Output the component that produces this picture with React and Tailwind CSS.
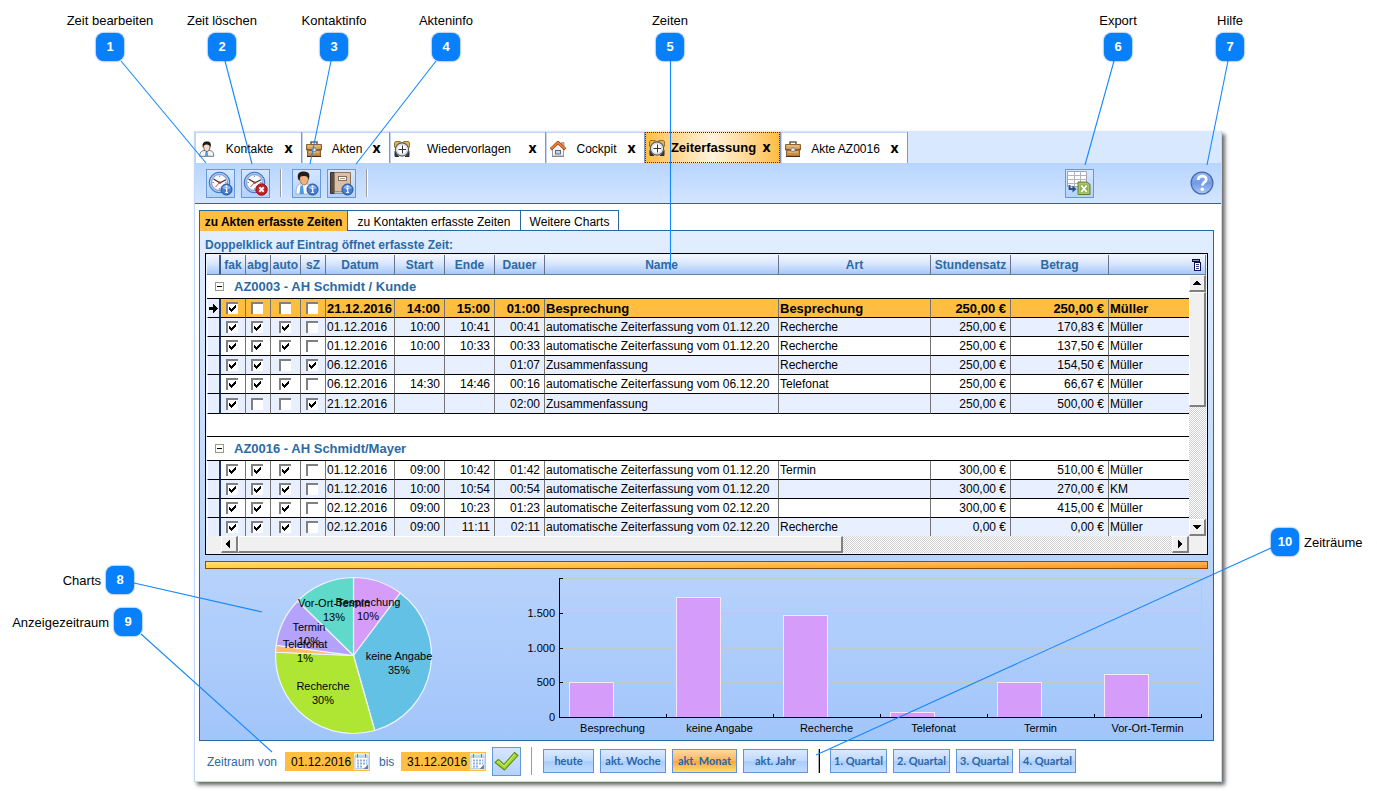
import React from "react";

const CALLOUTS = [
  { n: 1, label: "Zeit bearbeiten", x: 110, y: 47, side: "top", to: [206, 163], from: [121, 61] },
  { n: 2, label: "Zeit löschen", x: 222, y: 47, side: "top", to: [252, 164], from: [225, 61] },
  { n: 3, label: "Kontaktinfo", x: 334, y: 47, side: "top", to: [310, 164], from: [331, 61] },
  { n: 4, label: "Akteninfo", x: 446, y: 47, side: "top", to: [356, 164], from: [436, 61] },
  { n: 5, label: "Zeiten", x: 670, y: 47, side: "top", to: [670.5, 270], from: [670.5, 61] },
  { n: 6, label: "Export", x: 1118, y: 47, side: "top", to: [1085, 165], from: [1114, 61] },
  { n: 7, label: "Hilfe", x: 1230, y: 47, side: "top", to: [1207, 165], from: [1228, 61] },
  { n: 8, label: "Charts", x: 120, y: 580, side: "left", to: [262, 612], from: [134, 583] },
  { n: 9, label: "Anzeigezeitraum", x: 128, y: 622, side: "left", to: [272, 752], from: [141, 634] },
  { n: 10, label: "Zeiträume", x: 1285, y: 542, side: "right", to: [816, 755], from: [1271, 548] },
];

const LABEL_PLACE = {
  top: "left-1/2 -translate-x-1/2 -top-[21px]",
  left: "right-[33px] top-[6px]",
  right: "left-[33px] top-[6px]",
};

function Callouts() {
  return (
    <div className="pointer-events-none absolute inset-0 z-10 overflow-hidden">
      <svg className="absolute left-0 top-0 h-[791px] w-[1377px]" viewBox="0 0 1377 791" aria-hidden="true">
        {CALLOUTS.map((c) => (
          <line key={c.n} x1={c.from[0]} y1={c.from[1]} x2={c.to[0]} y2={c.to[1]} stroke="#1488ff" strokeWidth="1.1" />
        ))}
      </svg>
      {CALLOUTS.map((c) => (
        <div key={c.n} className="absolute h-[28px] w-[28px]" style={{ left: c.x - 14, top: c.y - 14 }}>
          <span className="flex h-[28px] w-[28px] items-center justify-center rounded-[8px] bg-[#0880fc] text-[13px] font-bold text-white shadow-[0_0_2px_#0060d0]">
            {c.n}
          </span>
          <span className={"absolute whitespace-nowrap text-[13px] leading-[18px] text-black " + LABEL_PLACE[c.side]}>{c.label}</span>
        </div>
      ))}
    </div>
  );
}

/* ---------- icons ---------- */

function PersonIcon({ className }) {
  return (
    <svg viewBox="0 0 16 16" className={className} aria-hidden="true">
      <path d="M.7 15.300c0-4 1.500-5.300 4.500-5.800h5.500c3 .5 4 1.800 4 5.800z" fill="#f4f6fa" stroke="#5f6672" strokeWidth=".9" />
      <path d="M6.500 10.500h2l.8 4.500H6z" fill="#4f9be0" />
      <path d="M4.500 4c0-2.500 6.500-2 6.500.5 0 3.800-1.200 6-3.200 6S4.500 8 4.500 4z" fill="#f6dcc6" stroke="#4a3a30" strokeWidth=".8" />
      <path d="M3.800 6.500C2.800 2 5 .3 8 .4c3.300 0 4.600 2 3.500 5.800C11 4.500 9 3.400 7.500 3.600 5.800 3.700 4.500 4.600 3.800 6.500z" fill="#1e1a18" />
    </svg>
  );
}

function BriefcaseIcon({ className }) {
  return (
    <svg viewBox="0 0 16 16" className={className} aria-hidden="true">
      <path d="M5 4V1h6v3" fill="none" stroke="#6f6250" strokeWidth="1.600" />
      <path d="M.5 3.500h15v5.500h-15z" fill="#d9a35c" stroke="#8a6434" />
      <path d="M1.500 9h13v6h-13z" fill="#c98e48" stroke="#8a6434" />
      <path d="M.5 8l5.500 1.500h4L15.500 8" fill="none" stroke="#7a5220" strokeWidth="1.200" />
      <path d="M2 5h12M3 11h10" stroke="#f0cb92" />
      <path d="M1 15.500h14" stroke="#4a3010" />
      <rect x="6" y="7" width="4" height="3.500" rx="1" fill="#dbe6ee" stroke="#66727f" strokeWidth=".7" />
    </svg>
  );
}

function AlarmIcon({ className }) {
  return (
    <svg viewBox="0 0 16 16" className={className} aria-hidden="true">
      <path d="M.5 6V1.500Q1 .5 2 .5h4L8 2l2-1.500h4q1 0 1.500 1V6l-2 2h-11z" fill="#e8b243" stroke="#7a5a1c" strokeWidth=".8" />
      <path d="M1 10v5.500h4M15 10v5.500h-4" fill="#3a3a40" stroke="#2d2d33" strokeWidth="1" />
      <circle cx="8" cy="8.500" r="6.600" fill="#eef1f6" stroke="#565c66" strokeWidth="1.200" />
      <circle cx="8" cy="8.500" r="5" fill="#fff" stroke="#c4ccd6" strokeWidth=".8" />
      <path d="M8.500 4.500v8M4.500 8.500h7.500" stroke="#333" strokeWidth="1" />
    </svg>
  );
}

function HouseIcon({ className }) {
  return (
    <svg viewBox="0 0 16 16" className={className} aria-hidden="true">
      <path d="M11.500 1.500h2.500V6h-2.500z" fill="#bdbdbd" stroke="#777" strokeWidth=".6" />
      <path d="M2.500 7.500L8 2.500l5.500 5V15h-11z" fill="#f4f4f4" stroke="#868686" strokeWidth=".8" />
      <path d="M.7 8.300L8 1.500l7.300 6.800" fill="none" stroke="#8c3412" strokeWidth="3" />
      <path d="M1 8L8 1.500 15 8" fill="none" stroke="#ef7d2c" strokeWidth="1.800" />
      <rect x="5.500" y="9.500" width="5" height="3.500" fill="#b8d8f4" stroke="#5b6f88" />
      <path d="M2 15.500h12" stroke="#8a8a8a" />
    </svg>
  );
}

function ClockFace() {
  return (
    <>
      <circle cx="11.500" cy="11.500" r="10.300" fill="#6d9be4" stroke="#3c6dbd" />
      <circle cx="11.500" cy="11.500" r="9" fill="none" stroke="#bcd6fa" />
      <circle cx="11.500" cy="11.500" r="7.800" fill="#f7f9fc" stroke="#8795aa" strokeWidth=".6" />
      <path d="M11.500 4.500v1.500M11.500 17v1.500M4.500 11.500h1.500M17 11.500h1.500" stroke="#777" strokeWidth=".8" />
      <path d="M5.500 8l6.500 3.800 6-3" fill="none" stroke="#333" strokeWidth="1.200" />
      <path d="M11.500 11.500L7.500 16" stroke="#d33" strokeWidth=".9" />
      <circle cx="11.800" cy="11.600" r="1.200" fill="#d22" />
    </>
  );
}

function InfoBadge() {
  return (
    <>
      <circle cx="18.500" cy="18.500" r="5.500" fill="#4a80d4" stroke="#1f4a9c" />
      <path d="M14.300 17c1-3.300 7.400-3.300 8.400 0-2 1.500-6 1.500-8.400 0z" fill="#8db4ee" />
      <path d="M17.300 17.600h1.400v4M17.300 21.500h2.600" stroke="#fff" strokeWidth="1.200" fill="none" />
      <circle cx="18.500" cy="15.300" r="1" fill="#fff" />
    </>
  );
}

function ClockInfoIcon() {
  return (
    <svg viewBox="0 0 25 25" className="h-[25px] w-[25px]" aria-hidden="true">
      <ClockFace />
      <InfoBadge />
    </svg>
  );
}

function ClockDeleteIcon() {
  return (
    <svg viewBox="0 0 25 25" className="h-[25px] w-[25px]" aria-hidden="true">
      <ClockFace />
      <circle cx="18.500" cy="18.500" r="5.700" fill="#c4202a" stroke="#8b0f18" />
      <path d="M16.300 16.300l4.400 4.400M20.700 16.300l-4.400 4.400" stroke="#fff" strokeWidth="2" />
    </svg>
  );
}

function PersonInfoIcon() {
  return (
    <svg viewBox="0 0 25 25" className="h-[25px] w-[25px]" aria-hidden="true">
      <path d="M2 23c0-6 1-9 4-10h7c4 .5 5 4 5 10z" fill="#fafbfd" stroke="#9aa5b8" strokeWidth=".8" />
      <path d="M6.500 14.500h2.500l1 8.500H5.500z" fill="#4c9ade" />
      <path d="M5.500 5.500c0-4 9-4 9 0 0 5-1.800 8.500-4.300 8.500S5.500 11 5.500 5.500z" fill="#eeb27c" stroke="#7a4a24" strokeWidth=".6" />
      <path d="M4.200 8.500C2.800 2.700 5 .5 10 .6c5.200.1 6.500 3.400 4.600 8.200-.5-2.700-1.600-4-4.600-3.900C7 5 5.700 5 5.800 9.500z" fill="#241e1a" />
      <InfoBadge />
    </svg>
  );
}

function BookInfoIcon() {
  return (
    <svg viewBox="0 0 25 25" className="h-[25px] w-[25px]" aria-hidden="true">
      <path d="M1.500 1.500h4v21h-4z" fill="#5b4d46" stroke="#3b302b" />
      <path d="M5.500 1.500h16v19.500h-16z" fill="#d8bfa6" stroke="#8d745e" />
      <path d="M5.500 21h16v1.500h-16z" fill="#f2f2f2" stroke="#777" strokeWidth=".7" />
      <rect x="9.500" y="5.500" width="8" height="4" fill="#fff" stroke="#8a6c52" />
      <path d="M11 7.500h5" stroke="#888" strokeWidth=".8" />
      <InfoBadge />
    </svg>
  );
}

function ExportIcon() {
  return (
    <svg viewBox="0 0 25 25" className="h-[25px] w-[25px]" aria-hidden="true">
      <path d="M.5 .5h19v15h-19z" fill="#fff" stroke="#a3a3ab" />
      <path d="M.5 4.500h19M.5 8.500h19M.5 12.500h19M7.500.5v15M13.500.5v15" stroke="#b3b3bd" fill="none" />
      <path d="M2.500 14v4h4" fill="none" stroke="#2a4f92" strokeWidth="1.800" />
      <path d="M5.500 14.500l4 3.500-4 3.500z" fill="#2a4f92" />
      <path d="M11 11h9l3 2.500V23.500H11z" fill="#a9c46c" stroke="#5d7f2c" />
      <path d="M13 13.500h8v8h-8z" fill="#8fb04c" />
      <path d="M14.300 14.500l5.400 6.500M19.700 14.500L14.300 21" stroke="#fff" strokeWidth="1.900" />
    </svg>
  );
}

function HelpIcon() {
  return (
    <svg viewBox="0 0 24 24" className="h-[24px] w-[24px]" aria-hidden="true">
      <defs>
        <linearGradient id="help-fill" x1="0" y1="0" x2="0" y2="1">
          <stop offset="0" stopColor="#9dbcf4" />
          <stop offset=".5" stopColor="#6f9ae6" />
          <stop offset="1" stopColor="#a9c8fa" />
        </linearGradient>
      </defs>
      <circle cx="12" cy="12" r="10.900" fill="url(#help-fill)" stroke="#4a6aa6" strokeWidth="1.200" />
      <path d="M8.200 9c0-5 8-5 8-.6 0 3-3.900 2.800-3.900 6.200" fill="none" stroke="#fff" strokeWidth="2.700" />
      <circle cx="12.300" cy="18.200" r="1.800" fill="#fff" />
    </svg>
  );
}

function CalendarIcon() {
  return (
    <svg viewBox="0 0 15 17" className="h-[17px] w-[15px]" aria-hidden="true">
      <path d="M0 0h15v17H0z" fill="#dfeaf7" />
      <path d="M1 3h13v12.500H1z" fill="#fff" stroke="#b4c6dc" strokeWidth=".8" />
      <path d="M1 2.500h13V5H1z" fill="#c3d3e6" />
      <path d="M3.500 1v3.500M11.500 1v3.500" stroke="#6c7c92" />
      <path d="M3 7.500h10M3 10.500h10M3 13.500h6" stroke="#8fb2e4" strokeWidth="2" strokeDasharray="2 1" />
      <path d="M9.500 16l4.500-4.500V16z" fill="#6e8096" />
    </svg>
  );
}

function ApplyIcon() {
  return (
    <svg viewBox="0 0 25 25" className="h-[25px] w-[25px]" aria-hidden="true">
      <path d="M1 13.500L4.500 10.500l5.500 5L20.500 3.500 24 6.500 10.500 21z" fill="#a8d828" stroke="#5f8c22" strokeWidth="1.100" strokeLinejoin="round" />
      <path d="M3 13.300l1.700-1.300 5.500 5L20.600 5.300" fill="none" stroke="#d2f07c" strokeWidth="1" />
    </svg>
  );
}

function ColumnsIcon() {
  return (
    <svg viewBox="0 0 10 12" className="h-[12px] w-[10px]" shapeRendering="crispEdges" aria-hidden="true">
      <path d="M0 0h8v3H0z" fill="#10103a" />
      <path d="M1 1h6v1H1z" fill="#7c8ccc" />
      <path d="M2.500 3.500h6v8h-6z" fill="#fff" stroke="#10103a" />
      <path d="M4 5.500h3M4 7.500h3M4 9.500h3" stroke="#2c3c9c" />
    </svg>
  );
}

/* ---------- tabs and toolbar ---------- */

const TABS = [
  { label: "Kontakte", Icon: PersonIcon, width: "w-[107px]" },
  { label: "Akten", Icon: BriefcaseIcon, width: "w-[88px]" },
  { label: "Wiedervorlagen", Icon: AlarmIcon, width: "w-[156px]" },
  { label: "Cockpit", Icon: HouseIcon, width: "w-[99px]" },
  { label: "Zeiterfassung", Icon: AlarmIcon, width: "w-[136px]", active: true },
  { label: "Akte AZ0016", Icon: BriefcaseIcon, width: "w-[127px]" },
];

function TabStrip() {
  return (
    <div className="flex h-[32px] bg-[#d8e8fe] pt-px">
      {TABS.map(({ label, Icon, width, active }) => (
        <div key={label} className={"flex h-[31px] border-r border-[#7d98c6] bg-white " + width}>
          <div
            className={
              "flex flex-1 items-center pl-[3px] pr-[8px] pt-px " +
              (active
                ? "border border-dotted border-[#1a2a6a] bg-gradient-to-r from-[#ffbe3c] via-[#fff3dc] to-[#ffbe3c]"
                : "border-l border-t border-[#c3d2f2]")
            }
          >
            <button type="button" className="flex flex-1 items-center">
              <Icon className="h-[16px] w-[16px] shrink-0" />
              <span className={"flex-1 whitespace-nowrap text-center leading-[16px] " + (active ? "text-[13px] font-bold" : "text-[12px]")}>{label}</span>
            </button>
            <button type="button" aria-label={label + " schließen"} className="w-[9px] pb-[2px] font-['Open_Sans',sans-serif] text-[14px] font-bold leading-[16px]">
              x
            </button>
          </div>
        </div>
      ))}
    </div>
  );
}

function IconButton({ label, children }) {
  return (
    <button
      type="button"
      aria-label={label}
      className="flex h-[29px] w-[29px] shrink-0 items-center justify-center border border-[#6698dc] bg-gradient-to-b from-[#d6e6ff] to-[#b4d2fd]"
    >
      {children}
    </button>
  );
}

function Toolbar() {
  return (
    <div className="flex h-[41px] items-center gap-[6px] border-b border-[#2a669f] bg-gradient-to-b from-[#b7d5ff] to-[#d4e5ff] pl-[11px] pr-[7px]">
      <IconButton label="Zeit bearbeiten"><ClockInfoIcon /></IconButton>
      <IconButton label="Zeit löschen"><ClockDeleteIcon /></IconButton>
      <span className="mx-[4px] h-[28px] w-[2px] border-l border-[#9d9d9d] bg-white" />
      <IconButton label="Kontaktinfo"><PersonInfoIcon /></IconButton>
      <IconButton label="Akteninfo"><BookInfoIcon /></IconButton>
      <span className="mx-[4px] h-[28px] w-[2px] border-l border-[#9d9d9d] bg-white" />
      <span className="flex-1" />
      <IconButton label="Export"><ExportIcon /></IconButton>
      <button type="button" aria-label="Hilfe" className="ml-[90px]"><HelpIcon /></button>
    </div>
  );
}

/* ---------- grid ---------- */

const COLUMNS = [
  { key: "fak", title: "fak", width: "w-[25px]", check: true },
  { key: "abg", title: "abg", width: "w-[25px]", check: true },
  { key: "auto", title: "auto", width: "w-[30px]", check: true },
  { key: "sz", title: "sZ", width: "w-[25px]", check: true },
  { key: "date", title: "Datum", width: "w-[69px]", align: "pl-px text-left" },
  { key: "start", title: "Start", width: "w-[50px]", align: "pr-[4px] text-right" },
  { key: "end", title: "Ende", width: "w-[50px]", align: "pr-[4px] text-right" },
  { key: "dur", title: "Dauer", width: "w-[50px]", align: "pr-[4px] text-right" },
  { key: "name", title: "Name", width: "w-[234px]", align: "pl-px text-left" },
  { key: "kind", title: "Art", width: "w-[152px]", align: "pl-px text-left" },
  { key: "rate", title: "Stundensatz", width: "w-[80px]", align: "pr-[4px] text-right" },
  { key: "sum", title: "Betrag", width: "w-[98px]", align: "pr-[4px] text-right" },
  { key: "who", title: "", width: "", align: "pl-px text-left" },
];

const row = (flags, date, start, end, dur, name, kind, rate, sum, who) => ({
  fak: flags[0] === "1",
  abg: flags[1] === "1",
  auto: flags[2] === "1",
  sz: flags[3] === "1",
  date, start, end, dur, name, kind, rate, sum, who,
});

const AUTO = "automatische Zeiterfassung vom ";

const GROUPS = [
  {
    title: "AZ0003 - AH Schmidt / Kunde",
    rows: [
      { ...row("1000", "21.12.2016", "14:00", "15:00", "01:00", "Besprechung", "Besprechung", "250,00 €", "250,00 €", "Müller"), selected: true },
      row("1110", "01.12.2016", "10:00", "10:41", "00:41", AUTO + "01.12.20", "Recherche", "250,00 €", "170,83 €", "Müller"),
      row("1110", "01.12.2016", "10:00", "10:33", "00:33", AUTO + "01.12.20", "Recherche", "250,00 €", "137,50 €", "Müller"),
      row("1101", "06.12.2016", "", "", "01:07", "Zusammenfassung", "Recherche", "250,00 €", "154,50 €", "Müller"),
      row("1110", "06.12.2016", "14:30", "14:46", "00:16", AUTO + "06.12.20", "Telefonat", "250,00 €", "66,67 €", "Müller"),
      row("1001", "21.12.2016", "", "", "02:00", "Zusammenfassung", "", "250,00 €", "500,00 €", "Müller"),
    ],
  },
  {
    title: "AZ0016 - AH Schmidt/Mayer",
    rows: [
      row("1110", "01.12.2016", "09:00", "10:42", "01:42", AUTO + "01.12.20", "Termin", "300,00 €", "510,00 €", "Müller"),
      row("1110", "01.12.2016", "10:00", "10:54", "00:54", AUTO + "01.12.20", "", "300,00 €", "270,00 €", "KM"),
      row("1110", "02.12.2016", "09:00", "10:23", "01:23", AUTO + "02.12.20", "", "300,00 €", "415,00 €", "Müller"),
      row("1110", "02.12.2016", "09:00", "11:11", "02:11", AUTO + "02.12.20", "Recherche", "0,00 €", "0,00 €", "Müller"),
    ],
  },
];

function CheckCell({ checked, label }) {
  return (
    <span className="relative mx-auto block h-[12px] w-[12px]">
      <input
        type="checkbox"
        defaultChecked={checked}
        aria-label={label}
        className="peer block h-[12px] w-[12px] appearance-none border-l-2 border-t-2 border-[#808080] bg-white"
      />
      <svg viewBox="0 0 7 7" shapeRendering="crispEdges" className="pointer-events-none absolute left-[3px] top-[3px] hidden h-[7px] w-[7px] peer-checked:block" aria-hidden="true">
        <path d="M0 2h1v1h1v1h1V3h1V2h1V1h1V0h1v3H6v1H5v1H4v1H3v1H2V6H1V5H0z" fill="#000" />
      </svg>
    </span>
  );
}

function EntryRow({ entry, stripe, last, end }) {
  const tone = entry.selected ? "bg-[#ffbe3f] text-[13px] font-bold" : stripe ? "bg-[#e8efff] text-[12px]" : "bg-white text-[12px]";
  const edge = end ? "h-[18px]" : last ? "h-[20px] border-b border-b-black" : "h-[19px] border-b border-b-black";
  return (
    <tr className={tone}>
      <td className={"border-l border-l-white border-r-2 border-r-[#1d3763] bg-[#e6eeff] p-0 " + edge}>
        {entry.selected && (
          <svg viewBox="0 0 9 9" className="ml-px h-[9px] w-[9px]" shapeRendering="crispEdges" aria-label="Aktueller Eintrag">
            <path d="M0 3h4V0h1v1h1v1h1v1h1v1h1v1H8v1H7v1H6v1H5v1H4V6H0z" fill="#000" />
          </svg>
        )}
      </td>
      {COLUMNS.map((c) => (
        <td
          key={c.key}
          className={
            "overflow-hidden whitespace-nowrap pb-0 leading-[17px] " + edge + " " +
            (c.key === "who" ? "" : "border-r border-r-[#757575] ") + (c.check ? "pl-0 pr-[2px] pt-0" : "px-0 pt-px " + c.align)
          }
        >
          {c.check ? <CheckCell checked={entry[c.key]} label={c.title + " " + entry.date} /> : entry[c.key]}
        </td>
      ))}
    </tr>
  );
}

function ArrowButton({ d, label }) {
  return (
    <button
      type="button"
      aria-label={label}
      className="flex h-[17px] w-[17px] shrink-0 items-center justify-center border-b-2 border-l border-r-2 border-t border-b-[#808080] border-l-white border-r-[#808080] border-t-white bg-[#f0f0f0]"
    >
      <svg viewBox="0 0 8 8" className="h-[8px] w-[8px]" shapeRendering="crispEdges" aria-hidden="true"><path d={d} fill="#000" /></svg>
    </button>
  );
}

const HEAD = "bg-gradient-to-b from-[#f4f8ff] via-[#d5e4fd] to-[#a6c8fa] border-b border-b-[#6d7f99]";
const DITHER = "bg-[repeating-conic-gradient(#cfcfcf_0_25%,#ffffff_0_50%)] bg-[length:2px_2px]";
const THUMB = "border-b-2 border-l border-r-2 border-t border-b-[#808080] border-l-white border-r-[#808080] border-t-white bg-[#f0f0f0]";

function TimesGrid() {
  return (
    <div className="border border-black bg-[#eef3fc] p-px">
      <div className="flex">
        <table className="min-w-0 flex-1 table-fixed border-separate border-spacing-0 bg-white">
          <colgroup>
            <col className="w-[14px]" />
            {COLUMNS.map((c) => <col key={c.key} className={c.width} />)}
          </colgroup>
          <thead>
            <tr>
              <th aria-label="Markierung" className={"h-[20px] border-r-2 border-r-[#3d5b8c] p-0 " + HEAD} />
              {COLUMNS.map((c) => (
                <th
                  key={c.key}
                  aria-label={c.title || "Bearbeiter"}
                  className={"h-[20px] p-0 text-center text-[12px] font-bold leading-[18px] text-[#2b6aa6] " + HEAD + (c.key === "who" ? "" : " border-r border-r-[#66748c]")}
                >
                  {c.title}
                </th>
              ))}
            </tr>
          </thead>
          {GROUPS.map((g, gi) => (
            <tbody key={g.title}>
              {gi > 0 && <tr><td colSpan={14} className="h-[23px] border-b border-black p-0" /></tr>}
              <tr>
                <td colSpan={14} className="h-[24px] border-b border-black p-0">
                  <div className="flex items-center gap-[10px] pl-[8px]">
                    <button type="button" aria-label="Gruppe zuklappen" className="flex h-[9px] w-[9px] items-center justify-center border border-[#9a9a86] bg-white">
                      <span className="h-px w-[5px] bg-black" />
                    </button>
                    <span className="pt-px text-[13px] font-bold leading-[20px] text-[#2b6aa6]">{g.title}</span>
                  </div>
                </td>
              </tr>
              {g.rows.map((r, i) => (
                <EntryRow
                  key={i}
                  entry={r}
                  stripe={i % 2 === 1}
                  last={gi === 0 && i === g.rows.length - 1}
                  end={gi === GROUPS.length - 1 && i === g.rows.length - 1}
                />
              ))}
            </tbody>
          ))}
        </table>
        <div className="flex w-[17px] shrink-0 flex-col">
          <button type="button" aria-label="Spaltenauswahl" className={"flex h-[20px] items-center justify-center border-r border-r-[#6d7f99] " + HEAD}>
            <ColumnsIcon />
          </button>
          <div className={"flex flex-1 flex-col " + DITHER}>
            <ArrowButton label="Nach oben" d="M3 2h2v1h1v1h1v1h1v1H0V5h1V4h1V3h1z" />
            <div className={"h-[115px] " + THUMB} />
            <span className="flex-1" />
            <ArrowButton label="Nach unten" d="M0 2h8v1H7v1H6v1H5v1H3V5H2V4H1V3H0z" />
          </div>
        </div>
      </div>
      <div className="flex h-[17px] bg-[#f0f0f0] pl-[14px]">
        <div className={"flex flex-1 " + DITHER}>
          <ArrowButton label="Nach links" d="M5 0v8H4V7H3V6H2V5H1V3h1V2h1V1h1V0z" />
          <div className={"w-5/8 " + THUMB} />
          <span className="flex-1" />
          <ArrowButton label="Nach rechts" d="M2 0v8h1V7h1V6h1V5h1V3H5V2H4V1H3V0z" />
        </div>
        <span className="w-[17px]" />
      </div>
    </div>
  );
}

/* ---------- charts ---------- */

const SLICES = [
  { name: "Besprechung", value: 500, pct: "10%", fill: "#d69cfa", x: 103, y: 33 },
  { name: "keine Angabe", value: 1730, pct: "35%", fill: "#64c1e6", x: 134, y: 87 },
  { name: "Recherche", value: 1470, pct: "30%", fill: "#aee633", x: 58, y: 117 },
  { name: "Telefonat", value: 70, pct: "1%", fill: "#ffbd69", x: 40, y: 75 },
  { name: "Termin", value: 500, pct: "10%", fill: "#b4a2fc", x: 44, y: 58 },
  { name: "Vor-Ort-Termin", value: 620, pct: "13%", fill: "#5fd9c9", x: 69, y: 34 },
];

function PieChart() {
  const total = SLICES.reduce((s, d) => s + d.value, 0);
  const cx = 88.5;
  const cy = 86.5;
  const r = 78;
  const at = (v) => {
    const a = (v / total) * Math.PI * 2;
    return [cx + r * Math.sin(a), cy - r * Math.cos(a)];
  };
  let acc = 0;
  return (
    <svg viewBox="0 0 180 171" className="h-[171px] w-[180px] shrink-0" role="img" aria-label="Zeiten nach Art">
      {SLICES.map((d) => {
        const [x1, y1] = at(acc);
        acc += d.value;
        const [x2, y2] = at(acc);
        return <path key={d.name} d={`M${cx} ${cy}L${x1} ${y1}A${r} ${r} 0 0 1 ${x2} ${y2}Z`} fill={d.fill} stroke="#eef4ff" strokeWidth="1.200" />;
      })}
      {SLICES.map((d) => (
        <text key={d.name} textAnchor="middle" fontSize="11" fill="#000">
          <tspan x={d.x} y={d.y + 4}>{d.name}</tspan>
          <tspan x={d.x} y={d.y + 18}>{d.pct}</tspan>
        </text>
      ))}
    </svg>
  );
}

const TICKS = [
  { label: "0", y: 148 },
  { label: "500", y: 113 },
  { label: "1.000", y: 79 },
  { label: "1.500", y: 44 },
  { label: "", y: 9 },
];

function BarChart() {
  return (
    <svg viewBox="0 0 688 171" className="h-[171px] w-[688px] shrink-0" role="img" aria-label="Beträge nach Art">
      <g shapeRendering="crispEdges">
        {TICKS.map((t) => <path key={t.y} d={`M40 ${t.y + 0.5}H682`} stroke="#c3c8cc" />)}
        <path d="M681.500 9V148" stroke="#c3c8cc" />
        {SLICES.map((d, i) => {
          const top = Math.round(149.2 - (d.value / 2000) * 139);
          return <rect key={d.name} x={49.5 + i * 107} y={top - 0.5} width="44" height={149 - top} fill="#d69cfa" stroke="#f8e4ff" />;
        })}
        <path d="M39.500 9V148.500H682" fill="none" stroke="#000" />
        {TICKS.map((t) => <path key={t.y} d={`M40 ${t.y + 0.5}h3`} stroke="#000" />)}
        {SLICES.map((d, i) => <path key={d.name} d={`M${146.5 + i * 107} 149v-4`} stroke="#000" />)}
      </g>
      {TICKS.map((t) => <text key={t.y} x="35" y={t.y + 4} textAnchor="end" fontSize="11">{t.label}</text>)}
      {SLICES.map((d, i) => <text key={d.name} x={92.5 + i * 107} y="163" textAnchor="middle" fontSize="11">{d.name}</text>)}
    </svg>
  );
}

/* ---------- footer ---------- */

function DateField({ id, label, value, labelWidth }) {
  return (
    <>
      <label htmlFor={id} className={"pt-px text-[12px] text-[#2b6aa6] " + labelWidth}>{label}</label>
      <span className="flex h-[19px] w-[85px] items-center bg-[#ffbe3f] pr-px">
        <input id={id} type="text" defaultValue={value} className="h-[19px] min-w-0 flex-1 bg-transparent pl-[6px] pt-px text-[12px] text-black" />
        <button type="button" aria-label="Kalender öffnen"><CalendarIcon /></button>
      </span>
    </>
  );
}

function RangeButton({ children, width, active }) {
  return (
    <button
      type="button"
      aria-pressed={!!active}
      className={
        "h-[24px] shrink-0 whitespace-nowrap border border-[#6094d6] text-center font-['Lato','Open_Sans',sans-serif] text-[11px] font-bold leading-[20px] text-[#2b66a4] " +
        width + " " +
        (active
          ? "bg-[linear-gradient(#ffd9a0,#ffb45c_48%,#ffa23a_50%,#ffde74)]"
          : "bg-[linear-gradient(#dbe9ff,#c0d9fe_48%,#a8ccff_50%,#c2dcff)]")
      }
    >
      {children}
    </button>
  );
}

function Footer() {
  return (
    <div className="flex h-[40px] items-center gap-[6px] whitespace-nowrap pl-[12px]">
      <DateField id="from" label="Zeitraum von" value="01.12.2016" labelWidth="w-[72px]" />
      <DateField id="to" label="bis" value="31.12.2016" labelWidth="ml-[3px] w-[16px]" />
      <IconButton label="Zeitraum anwenden"><ApplyIcon /></IconButton>
      <span className="mx-[4px] h-[28px] w-[2px] border-l border-[#9d9d9d]" />
      <RangeButton width="w-[51px]">heute</RangeButton>
      <RangeButton width="w-[66px]">akt. Woche</RangeButton>
      <RangeButton width="w-[65px]" active>akt. Monat</RangeButton>
      <RangeButton width="w-[65px]">akt. Jahr</RangeButton>
      <span className="mx-[4px] h-[24px] w-[2px] border-l border-[#b0b0b0] bg-black" />
      <RangeButton width="w-[57px]">1. Quartal</RangeButton>
      <RangeButton width="w-[57px]">2. Quartal</RangeButton>
      <RangeButton width="w-[57px]">3. Quartal</RangeButton>
      <RangeButton width="w-[57px]">4. Quartal</RangeButton>
    </div>
  );
}

const SUBTAB = "h-[20px] border-r border-t border-[#2a669f] text-center text-[12px] leading-[22px] whitespace-nowrap ";

export default function App() {
  return (
    <div className="relative min-h-screen bg-white pb-[9px] pl-[194px] pr-[155px] pt-[131px] font-['Liberation_Sans',Arial,sans-serif] text-black">
      <Callouts />
      <main className="min-w-[1028px] border-x border-b border-[#c3d8f8] bg-white shadow-[3px_3px_4px_rgba(0,0,0,0.6)]">
        <TabStrip />
        <Toolbar />
        <div className="pl-[4px] pr-[7px] pt-[6px]">
          <div className="flex">
            <button type="button" className={SUBTAB + "relative -mb-px h-[21px] w-[149px] border-l bg-[#ffbe3f] font-bold"}>zu Akten erfasste Zeiten</button>
            <button type="button" className={SUBTAB + "w-[173px] bg-white"}>zu Kontakten erfasste Zeiten</button>
            <button type="button" className={SUBTAB + "w-[98px] bg-white"}>Weitere Charts</button>
          </div>
          <section className="border border-[#2a669f] bg-gradient-to-b from-[#e2eeff] to-[#a2c5fa] px-[5px]">
            <p className="h-[22px] text-[12px] font-bold leading-[29px] text-[#2b6aa6]">Doppelklick auf Eintrag öffnet erfasste Zeit:</p>
            <TimesGrid />
            <div className="mt-[6px] h-[8px] border border-[#8a4a10] bg-[linear-gradient(to_bottom,rgba(255,255,255,0.3),rgba(255,255,255,0)),linear-gradient(to_right,#ffd23e,#ff9418)] shadow-[0_1px_0_#ffc75a]" />
            <div className="flex justify-between pl-[60px]">
              <PieChart />
              <BarChart />
            </div>
          </section>
        </div>
        <Footer />
      </main>
    </div>
  );
}
